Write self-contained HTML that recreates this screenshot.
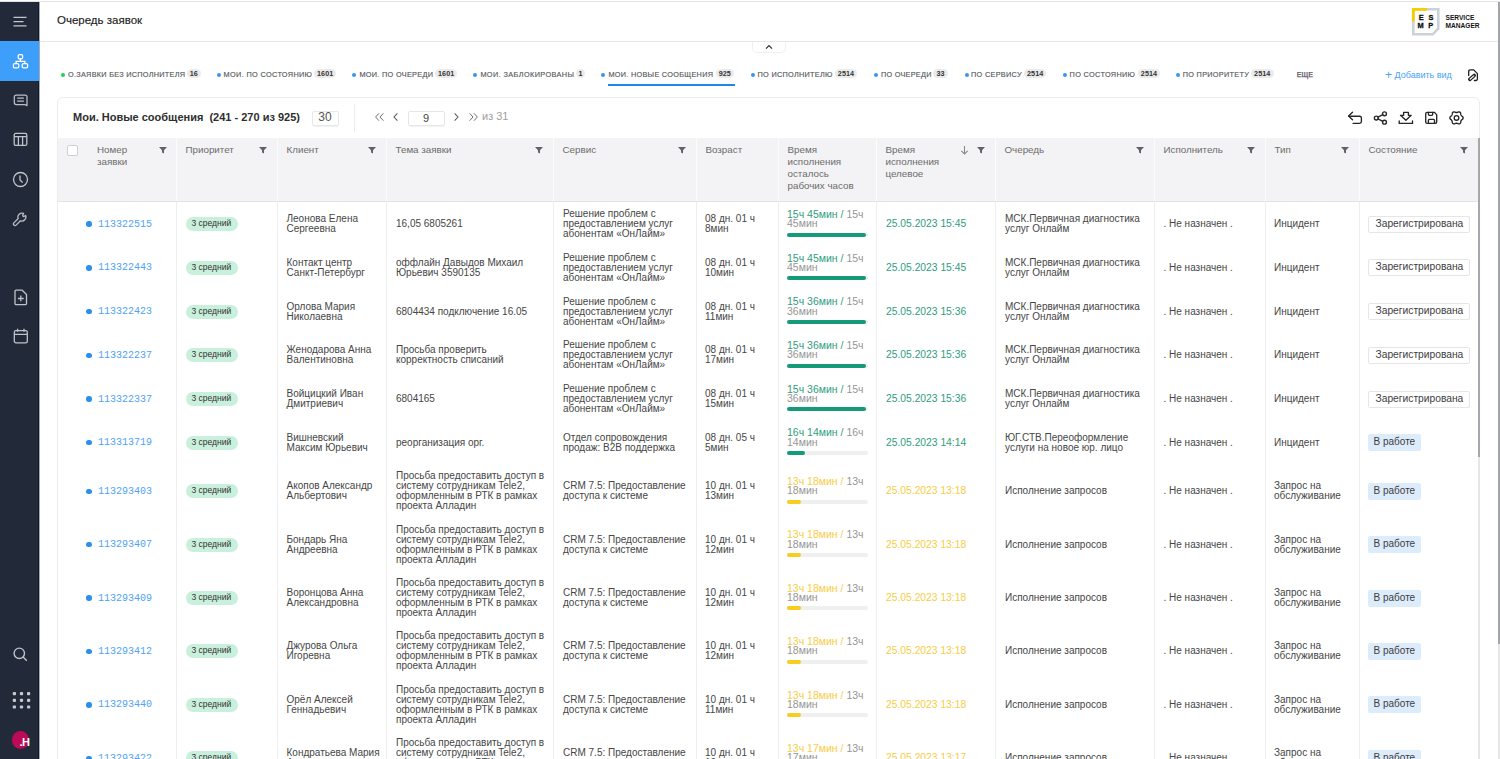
<!DOCTYPE html>
<html><head><meta charset="utf-8">
<style>
*{box-sizing:border-box;margin:0;padding:0}
html,body{width:1500px;height:759px;overflow:hidden;background:#fff;font-family:"Liberation Sans",sans-serif;color:#333}
.abs{position:absolute}
#topline{position:absolute;left:0;top:1px;width:1500px;height:1px;background:#e3e3e3}
#side{position:absolute;left:0;top:2px;width:39px;height:757px;background:#222a39;border-right:1px solid #141a26}
#sedge{position:absolute;left:39px;top:2px;width:1px;height:757px;background:#a4aab3}
#side svg{position:absolute}
#act{position:absolute;left:0;top:41px;width:39px;height:40px;background:#3d9ffa}
#hdr{position:absolute;left:39px;top:2px;width:1459px;height:40px;border-bottom:1px solid #e6e6e6;background:#fff}
#title{position:absolute;left:57px;top:13.8px;font-size:11.5px;color:#222;-webkit-text-stroke:0.15px #222;white-space:nowrap}
#collapse{position:absolute;left:752px;top:42px;width:34px;height:11px;border:1px solid #f0f0f0;border-top:none;border-radius:0 0 5px 5px;background:#fff}
.tdot{position:absolute;top:73px;width:4.1px;height:4.1px;border-radius:50%}
.tname{position:absolute;top:70.5px;font-size:7.3px;line-height:8px;color:#555a61;-webkit-text-stroke:0.15px #555a61;white-space:nowrap}
.badge{position:absolute;top:69.2px;height:9px;line-height:10.4px;border-radius:4.5px;background:#ebebeb;font-size:7.2px;font-weight:bold;color:#333;text-align:center;letter-spacing:0.1px}
#uline{position:absolute;left:608px;top:84px;width:127px;height:2px;background:#1f86ea}
#more{position:absolute;left:1296.8px;top:70.5px;font-size:7.2px;line-height:8px;letter-spacing:0px;color:#5c5464;-webkit-text-stroke:0.25px #5c5464}
#addv{position:absolute;left:1385px;top:67.3px;font-size:9px;color:#4a9ff5;white-space:nowrap}
#card{position:absolute;left:57px;top:97px;width:1423px;height:700px;border:1px solid #ececec;border-radius:6px;background:#fff}
#ctitle{position:absolute;left:73px;top:110.5px;font-size:11px;font-weight:bold;color:#2e2e2e;white-space:pre}
#psize{position:absolute;left:311.5px;top:110.5px;width:27px;height:15px;border:1px solid #e8e8e8;border-radius:2px;box-shadow:0 1px 1px rgba(0,0,0,0.06);font-size:12px;color:#555;text-align:center;line-height:11px}
#vsep{position:absolute;left:354px;top:104px;width:1px;height:28px;background:#ececec}
#pinput{position:absolute;left:407.5px;top:110.5px;width:37px;height:15px;border:1px solid #e6e6e6;border-radius:2px;box-shadow:0 1px 1px rgba(0,0,0,0.05);font-size:11px;color:#444;text-align:center;line-height:13px}
.pg{position:absolute;top:109px;font-size:13px;color:#666}
#of31{position:absolute;left:482px;top:110px;font-size:11px;color:#a0a0a0;white-space:nowrap}
.ico{position:absolute}
.logo{position:absolute;font-size:7.4px;font-weight:bold;line-height:8px;color:#111;-webkit-text-stroke:0.3px #111}
#thbg{position:absolute;left:58px;top:138px;width:1420px;height:63px;background:#f3f3f5}
#thline{position:absolute;left:58px;top:201px;width:1420px;height:1px;background:#e4e4e4}
.hsep{position:absolute;top:138px;width:1px;height:63px;background:#fbfbfc}
.bsep{position:absolute;top:202px;width:1px;height:560px;background:#eeeeee}
.ht{position:absolute;top:143.8px;font-size:9.8px;line-height:12px;color:#6c6c6c;white-space:nowrap}
.fi{position:absolute}
.sortar{position:absolute;font-size:10px;color:#888}
.cb{position:absolute;left:67px;top:145px;width:11px;height:11px;border:1px solid #d0d0d0;border-radius:2px;background:#fff}
.row{position:absolute;left:0;width:1478px}
.c{position:absolute;top:0;height:100%;display:flex;align-items:center;white-space:nowrap}
.tx{font-size:10px;line-height:10px;color:#464646}
.num{}
.dot{display:inline-block;width:5.5px;height:5.5px;border-radius:50%;background:#2b8ff2;margin-right:6.5px}
.nt{font-family:"Liberation Mono",monospace;font-size:10px;color:#4fa2f6}
.prio{display:inline-block;width:52px;height:14px;border-radius:7px;background:#c9f0dc;font-size:8.5px;line-height:12.5px;padding-left:5.5px;color:#333}
.tm{flex-direction:column;align-items:flex-start;justify-content:center}
.tt{font-size:10.5px;line-height:9.3px;color:#959595;margin-top:-2px}
.tg{color:#2f9d7e}
.ty{color:#f7cd45}
.bar{margin-top:4px;width:81px;height:4px;border-radius:2px;background:#efefef;position:relative}
.bar div{position:absolute;left:0;top:0;height:4px;border-radius:2px}
.bg{background:#159a7a}
.by{background:#f9cd1e}
.st{display:inline-block;font-size:10px;color:#3d3d3d}
.reg{font-size:10.25px;width:102px;height:17px;line-height:14.5px;border:1px solid #e6e6e6;border-radius:2px;padding-left:7px}
.work{width:53px;height:17px;line-height:16.5px;background:#ddecfb;border-radius:2px;padding-left:5.5px}
#isb{position:absolute;left:1478px;top:138px;width:2px;height:621px;background:#e6e6e9}
#isbt{position:absolute;left:1478px;top:138px;width:2px;height:318.5px;background:#a5a7ac}
#psb{position:absolute;left:1498px;top:2px;width:2px;height:757px;background:#e6e6e8}
#psbt{position:absolute;left:1498px;top:2px;width:2px;height:642px;background:#a3a5aa}
</style></head><body>
<div id="topline"></div>
<div id="hdr"></div>
<div id="title">Очередь заявок</div>
<div id="side">
  <svg style="left:13px;top:14px" width="14" height="12" viewBox="0 0 14 12"><path d="M0.5 1.3H13.5M0.5 5.6H10.5M0.5 9.9H13.5" stroke="#c3c7ce" stroke-width="1.3" fill="none"/></svg>
</div>
<div id="act"></div><div id="sedge"></div>
<svg class="abs" style="left:12px;top:53px" width="17" height="16" viewBox="0 0 17 16"><g fill="none" stroke="#fff" stroke-width="1.3"><rect x="6.2" y="1.6" width="4.4" height="4.2" rx="1.2"/><rect x="1.4" y="10.6" width="5.4" height="4.2" rx="1.2"/><rect x="10.2" y="10.6" width="5.4" height="4.2" rx="1.2"/><path d="M8.4 5.8V8.3M4.1 10.6V8.3H12.9V10.6"/></g></svg>
<svg class="abs" style="left:13px;top:93px" width="16" height="15" viewBox="0 0 16 15"><g fill="none" stroke="#b9bec7" stroke-width="1.25" stroke-linejoin="round"><path d="M3.3 2.1H12Q14 2.1 14 4.1V12.6L11.6 11.5H3.3Q1.3 11.5 1.3 9.5V4.1Q1.3 2.1 3.3 2.1Z"/><path d="M4.2 5.1H10.9M4.2 8H10.9"/></g></svg>
<svg class="abs" style="left:13px;top:132px" width="15" height="15" viewBox="0 0 15 15"><g fill="none" stroke="#bfc3ca" stroke-width="1.3"><rect x="1.2" y="1.4" width="12.6" height="12" rx="1.5"/><path d="M1.2 4.6H13.8M5.4 4.6V13.4M9.6 4.6V13.4"/></g></svg>
<svg class="abs" style="left:12px;top:171px" width="17" height="17" viewBox="0 0 17 17"><g fill="none" stroke="#bfc3ca" stroke-width="1.3"><circle cx="8.5" cy="8.5" r="7"/><path d="M8 4.5V9L10.6 11.4"/></g></svg>
<svg class="abs" style="left:12.3px;top:210.6px" width="17" height="17" viewBox="0 0 17 17"><path fill="none" stroke="#b9bec7" stroke-width="1.3" stroke-linejoin="round" d="M1.87 11.87L6.17 7.57A4.1 4.1 0 0 1 11.58 2.39L10.6 4.6Q10.9 5.7 12 5.5L13.61 4.43A4.1 4.1 0 0 1 8.43 9.83L4.13 14.13A1.6 1.6 0 0 1 1.87 11.87Z"/></svg>
<svg class="abs" style="left:14px;top:289px" width="14" height="17" viewBox="0 0 14 17"><g fill="none" stroke="#bfc3ca" stroke-width="1.3" stroke-linejoin="round"><path d="M2.3 1.2H8.2L12.5 5.5V14.4Q12.5 15.7 11.2 15.7H2.3Q1 15.7 1 14.4V2.5Q1 1.2 2.3 1.2Z"/><path d="M6.8 6.6V12.3M3.9 9.5H9.7"/></g></svg>
<svg class="abs" style="left:13px;top:328px" width="16" height="16" viewBox="0 0 16 16"><g fill="none" stroke="#bfc3ca" stroke-width="1.3"><rect x="1.3" y="2.6" width="13" height="12.2" rx="1.6"/><path d="M1.3 6.4H14.3M4.6 0.8V3.8M11 0.8V3.8"/></g></svg>
<svg class="abs" style="left:13px;top:647px" width="15" height="15" viewBox="0 0 15 15"><g fill="none" stroke="#bfc3ca" stroke-width="1.4"><circle cx="6.3" cy="6.3" r="5.2"/><path d="M10.1 10.1L13.8 13.8"/></g></svg>
<svg class="abs" style="left:12px;top:691px" width="19" height="19" viewBox="0 0 19 19"><g fill="#c5c9d0">
<rect x="0.8" y="1" width="3.2" height="3.2" rx="0.8"/><rect x="7.9" y="1" width="3.2" height="3.2" rx="0.8"/><rect x="15" y="1" width="3.2" height="3.2" rx="0.8"/>
<rect x="0.8" y="7.7" width="3.2" height="3.2" rx="0.8"/><rect x="7.9" y="7.7" width="3.2" height="3.2" rx="0.8"/><rect x="15" y="7.7" width="3.2" height="3.2" rx="0.8"/>
<rect x="0.8" y="14.4" width="3.2" height="3.2" rx="0.8"/><rect x="7.9" y="14.4" width="3.2" height="3.2" rx="0.8"/><rect x="15" y="14.4" width="3.2" height="3.2" rx="0.8"/></g></svg>
<div class="abs" style="left:12px;top:731.3px;width:17.4px;height:17.4px;border-radius:50%;background:#bb0a57"><span style="position:absolute;right:0px;top:6.2px;color:#fff;font-size:11px;font-weight:bold;line-height:10px;letter-spacing:-0.6px;white-space:nowrap">.Н</span></div>

<!-- logo -->
<svg class="abs" style="left:1411px;top:7px" width="30" height="29" viewBox="0 0 30 29"><path d="M2.3 2.3H27.3V21.5L21.8 27.3H2.3Z" fill="#fff" stroke="#cdd2d8" stroke-width="2.6"/><path d="M2.3 14.5V2.3H16" fill="none" stroke="#f7cc00" stroke-width="2.8"/></svg>
<div class="logo" style="left:1418.8px;top:14px">E</div><div class="logo" style="left:1428.5px;top:14px">S</div><div class="logo" style="left:1417.6px;top:22px">M</div><div class="logo" style="left:1428.3px;top:22px">P</div>
<div class="abs" style="left:1445.5px;top:14px;font-size:6.6px;font-weight:bold;line-height:7.8px;color:#151515;white-space:pre">SERVICE<br>MANAGER</div>

<div id="collapse"></div>
<svg class="abs" style="left:765px;top:44px" width="8" height="6" viewBox="0 0 8 6"><path d="M1 4.6L4 1.6L7 4.6" fill="none" stroke="#333" stroke-width="1.3"/></svg>

<span class="tdot" style="left:61px;background:#1fd25a"></span><span class="tname" style="left:68px;letter-spacing:0.278px">О.ЗАЯВКИ БЕЗ ИСПОЛНИТЕЛЯ</span><span class="badge" style="left:187px;width:13.6px">16</span><span class="tdot" style="left:216.5px;background:#3a95f0"></span><span class="tname" style="left:223.6px;letter-spacing:0.361px">МОИ. ПО СОСТОЯНИЮ</span><span class="badge" style="left:314.4px;width:21.6px">1601</span><span class="tdot" style="left:352.4px;background:#3a95f0"></span><span class="tname" style="left:359.4px;letter-spacing:0.316px">МОИ. ПО ОЧЕРЕДИ</span><span class="badge" style="left:435.4px;width:21.6px">1601</span><span class="tdot" style="left:473.4px;background:#3a95f0"></span><span class="tname" style="left:480.4px;letter-spacing:0.406px">МОИ. ЗАБЛОКИРОВАНЫ</span><span class="badge" style="left:576px;width:9.2px">1</span><span class="tdot" style="left:601.3px;background:#3a95f0"></span><span class="tname" style="left:608.4px;letter-spacing:0.296px">МОИ. НОВЫЕ СООБЩЕНИЯ</span><span class="badge" style="left:715.6px;width:18.4px">925</span><span class="tdot" style="left:751px;background:#3a95f0"></span><span class="tname" style="left:757.6px;letter-spacing:0.285px">ПО ИСПОЛНИТЕЛЮ</span><span class="badge" style="left:835px;width:22px">2514</span><span class="tdot" style="left:873.6px;background:#3a95f0"></span><span class="tname" style="left:881px;letter-spacing:0.253px">ПО ОЧЕРЕДИ</span><span class="badge" style="left:933px;width:15px">33</span><span class="tdot" style="left:965px;background:#3a95f0"></span><span class="tname" style="left:971px;letter-spacing:0.319px">ПО СЕРВИСУ</span><span class="badge" style="left:1024px;width:22.4px">2514</span><span class="tdot" style="left:1063px;background:#3a95f0"></span><span class="tname" style="left:1069.6px;letter-spacing:0.349px">ПО СОСТОЯНИЮ</span><span class="badge" style="left:1138px;width:22px">2514</span><span class="tdot" style="left:1176px;background:#3a95f0"></span><span class="tname" style="left:1182.8px;letter-spacing:0.290px">ПО ПРИОРИТЕТУ</span><span class="badge" style="left:1251px;width:22.5px">2514</span>
<div id="uline"></div>
<div id="more">ЕЩЕ</div>
<div id="addv"><span style="font-size:12px;position:relative;top:1px">+</span> Добавить вид</div>
<svg class="abs" style="left:1466px;top:68px" width="14" height="15" viewBox="0 0 14 15"><g fill="none" stroke="#1e1e1e" stroke-width="1.3" stroke-linejoin="round" stroke-linecap="round"><path d="M2.7 7.6V3.4Q2.7 1.9 4.2 1.9H7.7L11.4 5.6V11.1Q11.4 12.5 10 12.5H8.4"/></g><path d="M3.8 11.4L8.2 7.5" stroke="#1e1e1e" stroke-width="3.6" stroke-linecap="round"/><path d="M4.2 11L7.8 7.9" stroke="#fff" stroke-width="1.2" stroke-linecap="round"/></svg>

<div id="card"></div>
<div id="ctitle">Мои. Новые сообщения  (241 - 270 из 925)</div>
<div id="psize">30</div>
<div id="vsep"></div>
<svg class="abs" style="left:374px;top:112px" width="11" height="10" viewBox="0 0 11 10"><path d="M5 1.3L1.6 5L5 8.7M9.4 1.3L6 5L9.4 8.7" fill="none" stroke="#707070" stroke-width="1"/></svg>
<svg class="abs" style="left:392px;top:112px" width="7" height="10" viewBox="0 0 7 10"><path d="M5.4 1.3L2 5L5.4 8.7" fill="none" stroke="#5a5a5a" stroke-width="1.05"/></svg>
<div id="pinput">9</div>
<svg class="abs" style="left:453px;top:112px" width="7" height="10" viewBox="0 0 7 10"><path d="M1.6 1.3L5 5L1.6 8.7" fill="none" stroke="#5a5a5a" stroke-width="1.05"/></svg>
<svg class="abs" style="left:468px;top:112px" width="11" height="10" viewBox="0 0 11 10"><path d="M1.6 1.3L5 5L1.6 8.7M6 1.3L9.4 5L6 8.7" fill="none" stroke="#707070" stroke-width="1"/></svg>
<div id="of31">из 31</div>

<!-- toolbar icons -->
<svg class="ico" style="left:1340px;top:104px" width="130" height="26" viewBox="0 0 130 26"><g fill="none" stroke="#262626" stroke-width="1.35" stroke-linejoin="round" stroke-linecap="round">
<path d="M12.5 8.2L8.6 12.1L12.5 15.8"/><path d="M8.8 12.2H19.6Q21.4 12.2 21.4 14V17.6Q21.4 19.4 19.6 19.4H13.1"/>
<circle cx="44.5" cy="9.8" r="1.95"/><circle cx="36.3" cy="14" r="1.95"/><circle cx="44.5" cy="18.2" r="1.95"/><path d="M38 13.1L42.8 10.7M38 14.9L42.8 17.3"/>
<path d="M63.6 8.4H68.4V11.3H71.2L65.9 16.2L60.5 11.3H63.6Z"/><path d="M59.2 17V19.4H72.5V17"/>
<path d="M87.1 8.4H94.6L96.7 10.9V18Q96.7 19.4 95.3 19.4H87.1Q85.7 19.4 85.7 18V9.8Q85.7 8.4 87.1 8.4Z"/><path d="M88.4 8.4V10.3Q88.4 11.3 89.4 11.3H91.7Q92.7 11.3 92.7 10.3V8.4M88.4 19.4V16.3Q88.4 15.3 89.4 15.3H93.5Q94.5 15.3 94.5 16.3V19.4"/>
<path d="M123.12 13.90 L123.09 14.25 L123.01 14.58 L122.87 14.91 L122.67 15.21 L122.30 15.45 L121.91 15.66 L121.68 15.89 L121.48 16.12 L121.31 16.35 L121.16 16.59 L121.03 16.84 L120.91 17.11 L120.81 17.39 L120.73 17.71 L120.74 18.14 L120.72 18.59 L120.56 18.91 L120.35 19.20 L120.10 19.44 L119.81 19.63 L119.50 19.78 L119.16 19.88 L118.81 19.92 L118.45 19.90 L118.05 19.70 L117.68 19.47 L117.37 19.38 L117.07 19.32 L116.78 19.29 L116.50 19.28 L116.22 19.29 L115.93 19.32 L115.63 19.38 L115.32 19.47 L114.95 19.70 L114.55 19.90 L114.19 19.92 L113.84 19.88 L113.50 19.78 L113.19 19.63 L112.90 19.44 L112.65 19.20 L112.44 18.91 L112.28 18.59 L112.26 18.14 L112.27 17.71 L112.19 17.39 L112.09 17.11 L111.97 16.84 L111.84 16.59 L111.69 16.35 L111.52 16.12 L111.32 15.89 L111.09 15.66 L110.70 15.45 L110.33 15.21 L110.13 14.91 L109.99 14.58 L109.91 14.25 L109.88 13.90 L109.91 13.55 L109.99 13.22 L110.13 12.89 L110.33 12.59 L110.70 12.35 L111.09 12.14 L111.32 11.91 L111.52 11.68 L111.69 11.45 L111.84 11.21 L111.97 10.96 L112.09 10.69 L112.19 10.41 L112.27 10.09 L112.26 9.66 L112.28 9.21 L112.44 8.89 L112.65 8.60 L112.90 8.36 L113.19 8.17 L113.50 8.02 L113.84 7.92 L114.19 7.88 L114.55 7.90 L114.95 8.10 L115.32 8.33 L115.63 8.42 L115.93 8.48 L116.22 8.51 L116.50 8.52 L116.78 8.51 L117.07 8.48 L117.37 8.42 L117.68 8.33 L118.05 8.10 L118.45 7.90 L118.81 7.88 L119.16 7.92 L119.50 8.02 L119.81 8.17 L120.10 8.36 L120.35 8.60 L120.56 8.89 L120.72 9.21 L120.74 9.66 L120.73 10.09 L120.81 10.41 L120.91 10.69 L121.03 10.96 L121.16 11.21 L121.31 11.45 L121.48 11.68 L121.68 11.91 L121.91 12.14 L122.30 12.35 L122.67 12.59 L122.87 12.89 L123.01 13.22 L123.09 13.55Z"/><circle cx="116.5" cy="13.9" r="2.3"/>
</g></svg>

<div id="thbg"></div>
<div class="cb"></div><div class="ht" style="left:97px">Номер<br>заявки</div><svg class="fi" style="left:159px;top:147px" width="8" height="7" viewBox="0 0 8 7"><path d="M0 0H8L5 3.2V6.5L3 5.5V3.2Z" fill="#5f6368"/></svg><div class="ht" style="left:185.5px">Приоритет</div><svg class="fi" style="left:258.7px;top:147px" width="8" height="7" viewBox="0 0 8 7"><path d="M0 0H8L5 3.2V6.5L3 5.5V3.2Z" fill="#5f6368"/></svg><div class="ht" style="left:286.5px">Клиент</div><svg class="fi" style="left:367.7px;top:147px" width="8" height="7" viewBox="0 0 8 7"><path d="M0 0H8L5 3.2V6.5L3 5.5V3.2Z" fill="#5f6368"/></svg><div class="ht" style="left:395.5px">Тема заявки</div><svg class="fi" style="left:534.7px;top:147px" width="8" height="7" viewBox="0 0 8 7"><path d="M0 0H8L5 3.2V6.5L3 5.5V3.2Z" fill="#5f6368"/></svg><div class="ht" style="left:562.5px">Сервис</div><svg class="fi" style="left:677.7px;top:147px" width="8" height="7" viewBox="0 0 8 7"><path d="M0 0H8L5 3.2V6.5L3 5.5V3.2Z" fill="#5f6368"/></svg><div class="ht" style="left:705.5px">Возраст</div><div class="ht" style="left:787.5px">Время<br>исполнения<br>осталось<br>рабочих часов</div><div class="ht" style="left:885.5px">Время<br>исполнения<br>целевое</div><svg class="fi" style="left:976.7px;top:147px" width="8" height="7" viewBox="0 0 8 7"><path d="M0 0H8L5 3.2V6.5L3 5.5V3.2Z" fill="#5f6368"/></svg><svg class="fi" style="left:960px;top:145px" width="9" height="10" viewBox="0 0 9 10"><path d="M4.5 1V8.6M1.3 5.9L4.5 8.9L7.7 5.9" fill="none" stroke="#8a8a8e" stroke-width="1.1"/></svg><div class="ht" style="left:1004.5px">Очередь</div><svg class="fi" style="left:1135.7px;top:147px" width="8" height="7" viewBox="0 0 8 7"><path d="M0 0H8L5 3.2V6.5L3 5.5V3.2Z" fill="#5f6368"/></svg><div class="ht" style="left:1163.5px">Исполнитель</div><svg class="fi" style="left:1246.7px;top:147px" width="8" height="7" viewBox="0 0 8 7"><path d="M0 0H8L5 3.2V6.5L3 5.5V3.2Z" fill="#5f6368"/></svg><div class="ht" style="left:1274.5px">Тип</div><svg class="fi" style="left:1340.7px;top:147px" width="8" height="7" viewBox="0 0 8 7"><path d="M0 0H8L5 3.2V6.5L3 5.5V3.2Z" fill="#5f6368"/></svg><div class="ht" style="left:1368.5px">Состояние</div><svg class="fi" style="left:1459.7px;top:147px" width="8" height="7" viewBox="0 0 8 7"><path d="M0 0H8L5 3.2V6.5L3 5.5V3.2Z" fill="#5f6368"/></svg><div class="hsep" style="left:176px"></div><div class="hsep" style="left:277px"></div><div class="hsep" style="left:386px"></div><div class="hsep" style="left:553px"></div><div class="hsep" style="left:696px"></div><div class="hsep" style="left:778px"></div><div class="hsep" style="left:876px"></div><div class="hsep" style="left:995px"></div><div class="hsep" style="left:1154px"></div><div class="hsep" style="left:1265px"></div><div class="hsep" style="left:1359px"></div>
<div id="thline"></div>
<div class="row" style="top:202.40px;height:43.7px"><div class="c num" style="left:86px;width:90px"><span class="dot"></span><span class="nt">113322515</span></div><div class="c" style="left:186px"><span class="prio">3 средний</span></div><div class="c tx" style="left:286.5px">Леонова Елена<br>Сергеевна</div><div class="c tx" style="left:396px">16,05 6805261</div><div class="c tx" style="left:563px">Решение проблем с<br>предоставлением услуг<br>абонентам «ОнЛайм»</div><div class="c tx" style="left:705px">08 дн. 01 ч<br>8мин</div><div class="c tm" style="left:787px"><div class="tt"><span class="tg">15ч 45мин /</span> 15ч<br>45мин</div><div class="bar"><div class="bg" style="width:79px"></div></div></div><div class="c tx tg" style="left:886px;font-size:10.3px">25.05.2023 15:45</div><div class="c tx" style="left:1005px">МСК.Первичная диагностика<br>услуг Онлайм</div><div class="c tx" style="left:1163.5px">. Не назначен .</div><div class="c tx" style="left:1274px">Инцидент</div><div class="c" style="left:1367.5px"><span class="st reg">Зарегистрирована</span></div></div><div class="row" style="top:246.10px;height:43.7px"><div class="c num" style="left:86px;width:90px"><span class="dot"></span><span class="nt">113322443</span></div><div class="c" style="left:186px"><span class="prio">3 средний</span></div><div class="c tx" style="left:286.5px">Контакт центр<br>Санкт-Петербург</div><div class="c tx" style="left:396px">оффлайн Давыдов Михаил<br>Юрьевич 3590135</div><div class="c tx" style="left:563px">Решение проблем с<br>предоставлением услуг<br>абонентам «ОнЛайм»</div><div class="c tx" style="left:705px">08 дн. 01 ч<br>10мин</div><div class="c tm" style="left:787px"><div class="tt"><span class="tg">15ч 45мин /</span> 15ч<br>45мин</div><div class="bar"><div class="bg" style="width:79px"></div></div></div><div class="c tx tg" style="left:886px;font-size:10.3px">25.05.2023 15:45</div><div class="c tx" style="left:1005px">МСК.Первичная диагностика<br>услуг Онлайм</div><div class="c tx" style="left:1163.5px">. Не назначен .</div><div class="c tx" style="left:1274px">Инцидент</div><div class="c" style="left:1367.5px"><span class="st reg">Зарегистрирована</span></div></div><div class="row" style="top:289.80px;height:43.7px"><div class="c num" style="left:86px;width:90px"><span class="dot"></span><span class="nt">113322423</span></div><div class="c" style="left:186px"><span class="prio">3 средний</span></div><div class="c tx" style="left:286.5px">Орлова Мария<br>Николаевна</div><div class="c tx" style="left:396px">6804434 подключение 16.05</div><div class="c tx" style="left:563px">Решение проблем с<br>предоставлением услуг<br>абонентам «ОнЛайм»</div><div class="c tx" style="left:705px">08 дн. 01 ч<br>11мин</div><div class="c tm" style="left:787px"><div class="tt"><span class="tg">15ч 36мин /</span> 15ч<br>36мин</div><div class="bar"><div class="bg" style="width:79px"></div></div></div><div class="c tx tg" style="left:886px;font-size:10.3px">25.05.2023 15:36</div><div class="c tx" style="left:1005px">МСК.Первичная диагностика<br>услуг Онлайм</div><div class="c tx" style="left:1163.5px">. Не назначен .</div><div class="c tx" style="left:1274px">Инцидент</div><div class="c" style="left:1367.5px"><span class="st reg">Зарегистрирована</span></div></div><div class="row" style="top:333.50px;height:43.7px"><div class="c num" style="left:86px;width:90px"><span class="dot"></span><span class="nt">113322237</span></div><div class="c" style="left:186px"><span class="prio">3 средний</span></div><div class="c tx" style="left:286.5px">Женодарова Анна<br>Валентиновна</div><div class="c tx" style="left:396px">Просьба проверить<br>корректность списаний</div><div class="c tx" style="left:563px">Решение проблем с<br>предоставлением услуг<br>абонентам «ОнЛайм»</div><div class="c tx" style="left:705px">08 дн. 01 ч<br>17мин</div><div class="c tm" style="left:787px"><div class="tt"><span class="tg">15ч 36мин /</span> 15ч<br>36мин</div><div class="bar"><div class="bg" style="width:79px"></div></div></div><div class="c tx tg" style="left:886px;font-size:10.3px">25.05.2023 15:36</div><div class="c tx" style="left:1005px">МСК.Первичная диагностика<br>услуг Онлайм</div><div class="c tx" style="left:1163.5px">. Не назначен .</div><div class="c tx" style="left:1274px">Инцидент</div><div class="c" style="left:1367.5px"><span class="st reg">Зарегистрирована</span></div></div><div class="row" style="top:377.20px;height:43.7px"><div class="c num" style="left:86px;width:90px"><span class="dot"></span><span class="nt">113322337</span></div><div class="c" style="left:186px"><span class="prio">3 средний</span></div><div class="c tx" style="left:286.5px">Войцицкий Иван<br>Дмитриевич</div><div class="c tx" style="left:396px">6804165</div><div class="c tx" style="left:563px">Решение проблем с<br>предоставлением услуг<br>абонентам «ОнЛайм»</div><div class="c tx" style="left:705px">08 дн. 01 ч<br>15мин</div><div class="c tm" style="left:787px"><div class="tt"><span class="tg">15ч 36мин /</span> 15ч<br>36мин</div><div class="bar"><div class="bg" style="width:79px"></div></div></div><div class="c tx tg" style="left:886px;font-size:10.3px">25.05.2023 15:36</div><div class="c tx" style="left:1005px">МСК.Первичная диагностика<br>услуг Онлайм</div><div class="c tx" style="left:1163.5px">. Не назначен .</div><div class="c tx" style="left:1274px">Инцидент</div><div class="c" style="left:1367.5px"><span class="st reg">Зарегистрирована</span></div></div><div class="row" style="top:420.90px;height:43.7px"><div class="c num" style="left:86px;width:90px"><span class="dot"></span><span class="nt">113313719</span></div><div class="c" style="left:186px"><span class="prio">3 средний</span></div><div class="c tx" style="left:286.5px">Вишневский<br>Максим Юрьевич</div><div class="c tx" style="left:396px">реорганизация орг.</div><div class="c tx" style="left:563px">Отдел сопровождения<br>продаж: B2B поддержка</div><div class="c tx" style="left:705px">08 дн. 05 ч<br>5мин</div><div class="c tm" style="left:787px"><div class="tt"><span class="tg">16ч 14мин /</span> 16ч<br>14мин</div><div class="bar"><div class="bg" style="width:18px"></div></div></div><div class="c tx tg" style="left:886px;font-size:10.3px">25.05.2023 14:14</div><div class="c tx" style="left:1005px">ЮГ.СТВ.Переоформление<br>услуги на новое юр. лицо</div><div class="c tx" style="left:1163.5px">. Не назначен .</div><div class="c tx" style="left:1274px">Инцидент</div><div class="c" style="left:1368px"><span class="st work">В работе</span></div></div><div class="row" style="top:464.60px;height:53.4px"><div class="c num" style="left:86px;width:90px"><span class="dot"></span><span class="nt">113293403</span></div><div class="c" style="left:186px"><span class="prio">3 средний</span></div><div class="c tx" style="left:286.5px">Акопов Александр<br>Альбертович</div><div class="c tx" style="left:396px">Просьба предоставить доступ в<br>систему сотрудникам Tele2,<br>оформленным в РТК в рамках<br>проекта Алладин</div><div class="c tx" style="left:563px">CRM 7.5: Предоставление<br>доступа к системе</div><div class="c tx" style="left:705px">10 дн. 01 ч<br>13мин</div><div class="c tm" style="left:787px"><div class="tt"><span class="ty">13ч 18мин /</span> 13ч<br>18мин</div><div class="bar"><div class="by" style="width:14px"></div></div></div><div class="c tx ty" style="left:886px;font-size:10.3px">25.05.2023 13:18</div><div class="c tx" style="left:1005px">Исполнение запросов</div><div class="c tx" style="left:1163.5px">. Не назначен .</div><div class="c tx" style="left:1274px">Запрос на<br>обслуживание</div><div class="c" style="left:1368px"><span class="st work">В работе</span></div></div><div class="row" style="top:518.00px;height:53.4px"><div class="c num" style="left:86px;width:90px"><span class="dot"></span><span class="nt">113293407</span></div><div class="c" style="left:186px"><span class="prio">3 средний</span></div><div class="c tx" style="left:286.5px">Бондарь Яна<br>Андреевна</div><div class="c tx" style="left:396px">Просьба предоставить доступ в<br>систему сотрудникам Tele2,<br>оформленным в РТК в рамках<br>проекта Алладин</div><div class="c tx" style="left:563px">CRM 7.5: Предоставление<br>доступа к системе</div><div class="c tx" style="left:705px">10 дн. 01 ч<br>12мин</div><div class="c tm" style="left:787px"><div class="tt"><span class="ty">13ч 18мин /</span> 13ч<br>18мин</div><div class="bar"><div class="by" style="width:14px"></div></div></div><div class="c tx ty" style="left:886px;font-size:10.3px">25.05.2023 13:18</div><div class="c tx" style="left:1005px">Исполнение запросов</div><div class="c tx" style="left:1163.5px">. Не назначен .</div><div class="c tx" style="left:1274px">Запрос на<br>обслуживание</div><div class="c" style="left:1368px"><span class="st work">В работе</span></div></div><div class="row" style="top:571.40px;height:53.4px"><div class="c num" style="left:86px;width:90px"><span class="dot"></span><span class="nt">113293409</span></div><div class="c" style="left:186px"><span class="prio">3 средний</span></div><div class="c tx" style="left:286.5px">Воронцова Анна<br>Александровна</div><div class="c tx" style="left:396px">Просьба предоставить доступ в<br>систему сотрудникам Tele2,<br>оформленным в РТК в рамках<br>проекта Алладин</div><div class="c tx" style="left:563px">CRM 7.5: Предоставление<br>доступа к системе</div><div class="c tx" style="left:705px">10 дн. 01 ч<br>12мин</div><div class="c tm" style="left:787px"><div class="tt"><span class="ty">13ч 18мин /</span> 13ч<br>18мин</div><div class="bar"><div class="by" style="width:14px"></div></div></div><div class="c tx ty" style="left:886px;font-size:10.3px">25.05.2023 13:18</div><div class="c tx" style="left:1005px">Исполнение запросов</div><div class="c tx" style="left:1163.5px">. Не назначен .</div><div class="c tx" style="left:1274px">Запрос на<br>обслуживание</div><div class="c" style="left:1368px"><span class="st work">В работе</span></div></div><div class="row" style="top:624.80px;height:53.4px"><div class="c num" style="left:86px;width:90px"><span class="dot"></span><span class="nt">113293412</span></div><div class="c" style="left:186px"><span class="prio">3 средний</span></div><div class="c tx" style="left:286.5px">Джурова Ольга<br>Игоревна</div><div class="c tx" style="left:396px">Просьба предоставить доступ в<br>систему сотрудникам Tele2,<br>оформленным в РТК в рамках<br>проекта Алладин</div><div class="c tx" style="left:563px">CRM 7.5: Предоставление<br>доступа к системе</div><div class="c tx" style="left:705px">10 дн. 01 ч<br>12мин</div><div class="c tm" style="left:787px"><div class="tt"><span class="ty">13ч 18мин /</span> 13ч<br>18мин</div><div class="bar"><div class="by" style="width:14px"></div></div></div><div class="c tx ty" style="left:886px;font-size:10.3px">25.05.2023 13:18</div><div class="c tx" style="left:1005px">Исполнение запросов</div><div class="c tx" style="left:1163.5px">. Не назначен .</div><div class="c tx" style="left:1274px">Запрос на<br>обслуживание</div><div class="c" style="left:1368px"><span class="st work">В работе</span></div></div><div class="row" style="top:678.20px;height:53.4px"><div class="c num" style="left:86px;width:90px"><span class="dot"></span><span class="nt">113293440</span></div><div class="c" style="left:186px"><span class="prio">3 средний</span></div><div class="c tx" style="left:286.5px">Орёл Алексей<br>Геннадьевич</div><div class="c tx" style="left:396px">Просьба предоставить доступ в<br>систему сотрудникам Tele2,<br>оформленным в РТК в рамках<br>проекта Алладин</div><div class="c tx" style="left:563px">CRM 7.5: Предоставление<br>доступа к системе</div><div class="c tx" style="left:705px">10 дн. 01 ч<br>11мин</div><div class="c tm" style="left:787px"><div class="tt"><span class="ty">13ч 18мин /</span> 13ч<br>18мин</div><div class="bar"><div class="by" style="width:14px"></div></div></div><div class="c tx ty" style="left:886px;font-size:10.3px">25.05.2023 13:18</div><div class="c tx" style="left:1005px">Исполнение запросов</div><div class="c tx" style="left:1163.5px">. Не назначен .</div><div class="c tx" style="left:1274px">Запрос на<br>обслуживание</div><div class="c" style="left:1368px"><span class="st work">В работе</span></div></div><div class="row" style="top:731.60px;height:53.4px"><div class="c num" style="left:86px;width:90px"><span class="dot"></span><span class="nt">113293422</span></div><div class="c" style="left:186px"><span class="prio">3 средний</span></div><div class="c tx" style="left:286.5px">Кондратьева Мария<br>Алексеевна</div><div class="c tx" style="left:396px">Просьба предоставить доступ в<br>систему сотрудникам Tele2,<br>оформленным в РТК в рамках<br>проекта Алладин</div><div class="c tx" style="left:563px">CRM 7.5: Предоставление<br>доступа к системе</div><div class="c tx" style="left:705px">10 дн. 01 ч<br>10мин</div><div class="c tm" style="left:787px"><div class="tt"><span class="ty">13ч 17мин /</span> 13ч<br>17мин</div><div class="bar"><div class="by" style="width:14px"></div></div></div><div class="c tx ty" style="left:886px;font-size:10.3px">25.05.2023 13:17</div><div class="c tx" style="left:1005px">Исполнение запросов</div><div class="c tx" style="left:1163.5px">. Не назначен .</div><div class="c tx" style="left:1274px">Запрос на<br>обслуживание</div><div class="c" style="left:1368px"><span class="st work">В работе</span></div></div><div class="bsep" style="left:176px"></div><div class="bsep" style="left:277px"></div><div class="bsep" style="left:386px"></div><div class="bsep" style="left:553px"></div><div class="bsep" style="left:696px"></div><div class="bsep" style="left:778px"></div><div class="bsep" style="left:876px"></div><div class="bsep" style="left:995px"></div><div class="bsep" style="left:1154px"></div><div class="bsep" style="left:1265px"></div><div class="bsep" style="left:1359px"></div>
<div id="isb"></div><div id="isbt"></div>
<div id="psb"></div><div id="psbt"></div>
</body></html>
